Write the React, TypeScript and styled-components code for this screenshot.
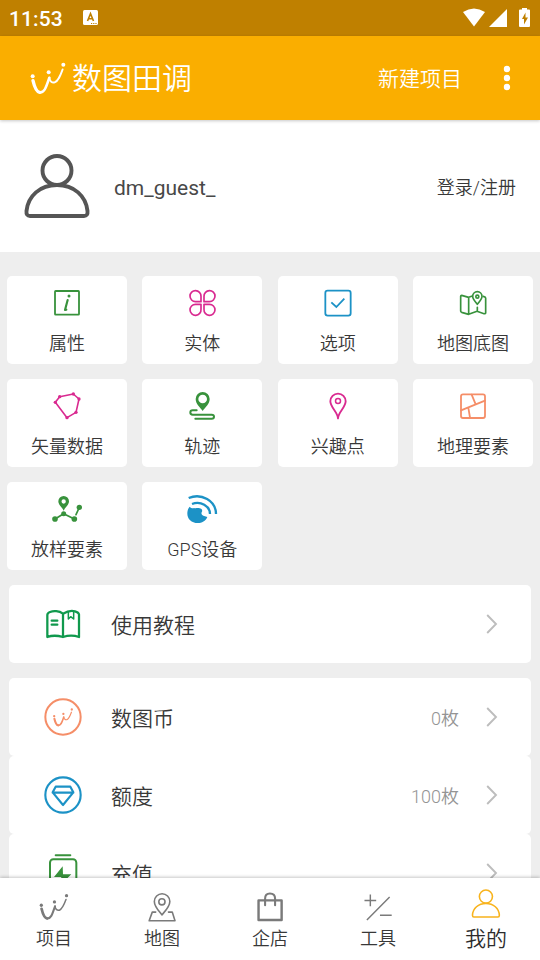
import React from 'react';
import styled, { createGlobalStyle } from 'styled-components';

const GREEN = '#38923c';
const PINK = '#d92a90';
const BLUE = '#1c92c6';
const CORAL = '#f58e68';
const GREY = '#7a7a7a';
const AMBER = '#f8b31c';

const GlobalStyle = createGlobalStyle`
  * { box-sizing: border-box; }
  body {
    margin: 0;
    background: #eee;
    font-family: Roboto, "Noto Sans CJK SC", sans-serif;
    color: #383838;
  }
  svg { display: block; flex: none; }
`;

const Screen = styled.div`
  width: 540px;
  height: 960px;
  display: flex;
  flex-direction: column;
  overflow: hidden;
  background: #eee;
  font-weight: 350;
`;

const StatusBar = styled.div`
  height: 36px;
  flex: none;
  display: flex;
  align-items: center;
  justify-content: space-between;
  padding: 0 9px;
  background: #bf8000;
  color: #fff;
`;

const StatusGroup = styled.div`
  display: flex;
  align-items: center;
`;

const Clock = styled.span`
  width: 74px;
  font-size: 21px;
  line-height: 36px;
  font-weight: 500;
  letter-spacing: 0.1px;
  padding-top: 2px;
`;

const AppBar = styled.header`
  height: 84px;
  flex: none;
  display: flex;
  align-items: center;
  padding: 0 22px 0 30px;
  background: #faae00;
  color: #fff;
  box-shadow: 0 1px 3px rgba(0, 0, 0, 0.22);
  z-index: 1;
`;

const AppTitle = styled.h1`
  margin: 2px auto 0 6px;
  font-size: 30px;
  line-height: 84px;
  font-weight: 350;
`;

const BarAction = styled.span`
  font-size: 21px;
  line-height: 84px;
  margin: 2px 34px 0 0;
`;

const Profile = styled.section`
  height: 132px;
  flex: none;
  display: flex;
  align-items: center;
  padding: 0 24px;
  background: #fff;
`;

const UserName = styled.span`
  margin: 3px auto 0 24px;
  font-size: 21px;
  font-weight: 400;
  color: #484848;
`;

const LoginLink = styled.span`
  margin-top: -1px;
  font-size: 18px;
`;

const Content = styled.main`
  flex: 1;
  min-height: 0;
  overflow: hidden;
  padding-top: 24px;
`;

const TileGrid = styled.div`
  display: grid;
  grid-template-columns: repeat(4, 120px);
  justify-content: space-between;
  row-gap: 15px;
  padding: 0 7px;
`;

const TileBox = styled.div`
  height: 88px;
  display: flex;
  flex-direction: column;
  align-items: center;
  padding-top: 9px;
  border-radius: 5px;
  background: #fff;
`;

const TileLabel = styled.span`
  margin-top: 9px;
  font-size: 18px;
  line-height: 28px;
  white-space: nowrap;
`;

const CardGroup = styled.div`
  margin: 15px 9px 0;
`;

const RowBox = styled.div`
  height: 78px;
  display: flex;
  align-items: center;
  padding: 0 33px;
  border-radius: 5px;
  background: #fff;
`;

const RowLabel = styled.span`
  margin: 4px auto 0 27px;
  font-size: 21px;
  line-height: 30px;
`;

const RowValue = styled.span`
  margin: 4px 27px 0 0;
  font-size: 18px;
  line-height: 28px;
  color: #949494;
`;

const TabBar = styled.nav`
  height: 82px;
  flex: none;
  display: grid;
  grid-template-columns: repeat(5, 1fr);
  background: #fff;
  box-shadow: 0 -1px 3px rgba(0, 0, 0, 0.22);
  z-index: 1;
`;

const Tab = styled.div<{ $active?: boolean }>`
  display: flex;
  flex-direction: column;
  align-items: center;
  padding-top: 10px;
  color: ${(p) => (p.$active ? '#2c2c2c' : '#383838')};
  font-size: ${(p) => (p.$active ? 21 : 18)}px;
  line-height: 30px;
`;

const LogoStrokes = ({ weight = 1 }: { weight?: number }) => (
  <g>
    <path d="M99 241C103 258 108 275 119 276" strokeWidth={10 * weight} />
    <path d="M119 276C134 278 139 258 148 232" strokeWidth={7.5 * weight} />
    <path d="M148 232C150 244 156 248 164 246C175 242 181 226 188 207" strokeWidth={5.5 * weight} />
    <g fill="currentColor" stroke="none">
      <circle cx="98" cy="228" r="6" />
      <circle cx="146" cy="216" r="6" />
      <circle cx="190" cy="193" r="6" />
    </g>
  </g>
);

const LogoMark = () => (
  <svg width="36" height="32" viewBox="90 185 108 96" fill="none" stroke="currentColor" strokeLinecap="round" strokeLinejoin="round">
    <LogoStrokes />
  </svg>
);

type DrawingProps = { color: string; size?: number; view?: number; weight?: number; children: React.ReactNode };

const Drawing = ({ color, size = 36, view = 108, weight = 5.4, children }: DrawingProps) => (
  <svg width={size} height={size} viewBox={`0 0 ${view} ${view}`} fill="none" color={color} stroke="currentColor" strokeWidth={weight} strokeLinecap="round" strokeLinejoin="round">
    {children}
  </svg>
);

const tiles = [
  {
    label: '属性',
    icon: (
      <Drawing color={GREEN}>
        <rect x="18" y="18" width="72" height="71" rx="2" />
        <path d="M56 45L48 75L52 74" strokeWidth="6.500" />
        <circle cx="60" cy="33" r="4.500" fill="currentColor" stroke="none" />
      </Drawing>
    ),
  },
  {
    label: '实体',
    icon: (
      <Drawing color={PINK} weight={5}>
        <path d="M51 50V34A16.500 16.500 0 1 0 34.500 50Z" />
        <path d="M60 50V34A16.500 16.500 0 1 1 76.500 50Z" />
        <path d="M51 58V73A16.500 16.500 0 1 1 34.500 58Z" />
        <path d="M60 58V73A16.500 16.500 0 1 0 76.500 58Z" />
      </Drawing>
    ),
  },
  {
    label: '选项',
    icon: (
      <Drawing color={BLUE}>
        <rect x="16" y="17" width="76" height="75" rx="7" />
        <path d="M34 52L49 66L73 41" strokeLinecap="butt" strokeLinejoin="miter" />
      </Drawing>
    ),
  },
  {
    label: '地图底图',
    icon: (
      <Drawing color={GREEN} weight={5}>
        <path d="M52 33L41 37L20 31Q17 31 17 34V78Q17 81 20 82L41 88L66 79L87 86Q92 87 92 83V39Q92 36 85 34M41 37V88M67 67V78" />
        <path d="M67 58C60 49 53 43 53 34A14 14 0 0 1 81 34C81 43 74 49 67 58Z" />
        <circle cx="67" cy="35" r="4.500" />
      </Drawing>
    ),
  },
  {
    label: '矢量数据',
    icon: (
      <Drawing color={PINK} weight={4.8}>
        <path d="M32 26L73 18L90 33L81 73L54 89L19 43Z" />
        <g fill="currentColor" stroke="none">
          <circle cx="32" cy="26" r="5" />
          <circle cx="73" cy="18" r="5" />
          <circle cx="90" cy="33" r="5" />
          <circle cx="81" cy="73" r="5" />
          <circle cx="54" cy="89" r="5" />
          <circle cx="19" cy="43" r="5" />
        </g>
      </Drawing>
    ),
  },
  {
    label: '轨迹',
    icon: (
      <Drawing color={GREEN} weight={6}>
        <path fill="currentColor" stroke="none" fillRule="evenodd" d="M56 69C48 57 35 48 35 33A21 21 0 0 1 77 33C77 48 64 57 56 69ZM56 20A13 13 0 1 0 56 46A13 13 0 1 0 56 20Z" />
        <path d="M38 67H26Q19 67 19 73.500Q19 80 26 80H83Q90 80 90 86Q90 92 83 92H34" />
      </Drawing>
    ),
  },
  {
    label: '兴趣点',
    icon: (
      <Drawing color={PINK} weight={5.6}>
        <path d="M54 91C53 72 31 58 31 40A23 23 0 0 1 77 40C77 58 55 72 54 91Z" />
        <circle cx="54" cy="39" r="7.500" strokeWidth="4.500" />
      </Drawing>
    ),
  },
  {
    label: '地理要素',
    icon: (
      <Drawing color={CORAL}>
        <rect x="18" y="19" width="72" height="71" rx="6" />
        <path d="M18 67L90 38M50 20L62 49M40 59L45 89" />
      </Drawing>
    ),
  },
  {
    label: '放样要素',
    icon: (
      <Drawing color={GREEN} weight={5}>
        <path d="M18 84L44 68L76 84M81 71L91 49" />
        <path fill="currentColor" stroke="none" fillRule="evenodd" d="M44 59C39 48 28 42 28 31A16 16 0 0 1 60 31C60 42 49 48 44 59ZM44 25A6.500 6.500 0 1 0 44 38A6.500 6.500 0 1 0 44 25Z" />
        <g fill="currentColor" stroke="none">
          <circle cx="44" cy="68" r="7.500" />
          <circle cx="18" cy="84" r="8.500" />
          <circle cx="76" cy="84" r="8.500" />
          <circle cx="91" cy="49" r="8" />
        </g>
      </Drawing>
    ),
  },
  {
    label: 'GPS设备',
    icon: (
      <Drawing color={BLUE} weight={7}>
        <path fill="currentColor" stroke="none" d="M17 47C21 51 26 53 30 51C35 53 41 50 47 52C53 52 57 59 53 64C51 68 54 73 58 74L70 78C65 90 53 96 42 96C22 96 10 83 10 68C10 60 12 52 17 47Z" />
        <path d="M14 21C52 5 96 29 96 69M24 39C50 29 78 45 78 69" strokeLinecap="butt" />
      </Drawing>
    ),
  },
];

const RowDrawing = ({ color, weight = 6, children }: { color: string; weight?: number; children: React.ReactNode }) => (
  <Drawing color={color} size={42} view={126} weight={weight}>{children}</Drawing>
);

const BookIcon = () => (
  <RowDrawing color="#10994d" weight={6.8}>
    <path d="M63 32C51 23 34 23 24 27Q16 30 16 36V102C30 97 49 98 63 102C78 97 97 97 111 102V34Q110 28 99 25C87 22 75 25 63 32ZM63 32V102" />
    <path d="M29 53H46M29 65H46" />
    <path d="M79 27V48L86 41L95 48V27" strokeWidth="4.500" />
  </RowDrawing>
);

const CoinIcon = () => (
  <RowDrawing color={CORAL}>
    <circle cx="63" cy="63" r="53" />
    <svg x="32" y="35" width="62" height="57" viewBox="90 185 108 96">
      <LogoStrokes weight={1.1} />
    </svg>
  </RowDrawing>
);

const DiamondIcon = () => (
  <RowDrawing color={BLUE} weight={6.4}>
    <circle cx="63" cy="63" r="53" />
    <path d="M41 38H85L94 55L63 93L32 55ZM32 56H94" />
  </RowDrawing>
);

const ChargeIcon = () => (
  <RowDrawing color={GREEN}>
    <path d="M41 10H85" />
    <rect x="24" y="22" width="79" height="98" rx="10" />
    <path fill="currentColor" stroke="none" d="M62 43L36 75H58L53 101L88 67H63Z" />
  </RowDrawing>
);

const Chevron = () => (
  <svg width="12" height="20" viewBox="0 0 12 20" fill="none" stroke="#bdbdbd" strokeWidth="1.900">
    <path d="M1.200 1L10 10L1.200 19" />
  </svg>
);

const Row = ({ icon, label, value }: { icon: React.ReactNode; label: string; value?: string }) => (
  <RowBox>
    {icon}
    <RowLabel>{label}</RowLabel>
    {value && <RowValue>{value}</RowValue>}
    <Chevron />
  </RowBox>
);

const TabDrawing = ({ color = GREY, weight = 4.6, children }: { color?: string; weight?: number; children: React.ReactNode }) => (
  <Drawing color={color} view={104.5} weight={weight}>{children}</Drawing>
);

const tabs = [
  {
    label: '项目',
    icon: (
      <TabDrawing>
        <svg x="9" y="13" width="86" height="82" viewBox="90 185 108 96">
          <LogoStrokes />
        </svg>
      </TabDrawing>
    ),
  },
  {
    label: '地图',
    icon: (
      <TabDrawing>
        <path d="M52 78C43 66 30 54 30 39A22.500 22.500 0 0 1 75 39C75 54 62 66 52 78Z" />
        <circle cx="52" cy="40" r="9" />
        <path d="M34 70H24L15 95H90L82 70H71" />
      </TabDrawing>
    ),
  },
  {
    label: '企店',
    icon: (
      <TabDrawing weight={7}>
        <rect x="19" y="36" width="67" height="57" />
        <path d="M38 50V31Q38 16 52 16Q67 16 67 31V50" strokeWidth="6" />
      </TabDrawing>
    ),
  },
  {
    label: '工具',
    icon: (
      <TabDrawing weight={4.2}>
        <path d="M13 36H47M30 19V53M20 93L86 26M58 79H92" strokeLinecap="butt" />
      </TabDrawing>
    ),
  },
  {
    label: '我的',
    active: true,
    icon: (
      <TabDrawing color={AMBER}>
        <circle cx="52" cy="25" r="19" />
        <path d="M13 79C14 59 30 45 52 45C74 45 90 59 91 79Q91 84 87 84H17Q13 84 13 79Z" />
      </TabDrawing>
    ),
  },
];

const KeyboardBadge = () => (
  <svg width="16" height="16" viewBox="0 0 16 16">
    <rect width="15" height="15" rx="1.500" fill="#fff" />
    <path d="M4.500 11L7.500 3.700L10.500 11M5.500 8.700H9.500" fill="none" stroke="#bf8000" strokeWidth="1.600" />
    <path d="M8 13.500H14" stroke="#bf8000" strokeDasharray="1.200 1" />
  </svg>
);

const SystemIcons = () => (
  <svg width="68" height="20" viewBox="0 0 68 20" fill="#fff">
    <path d="M0 4Q11 -3 22 4L11 18.500Z" />
    <path d="M44 1V19H26Z" />
    <path fillRule="evenodd" d="M59 0H64V1.500H66Q67 1.500 67 2.500V18Q67 19 66 19H57Q56 19 56 18V2.500Q56 1.500 57 1.500H59ZM62.500 4.500L59 11H61V16.500L65 9.500H62.500Z" />
  </svg>
);

const Avatar = () => (
  <svg width="66" height="66" viewBox="0 0 66 66" fill="none" stroke="#555" strokeWidth="3.900" strokeLinejoin="round">
    <circle cx="33" cy="17.500" r="14.500" />
    <path d="M2.500 58C4 43 16 32 33 32C50 32 62 43 63.500 58Q64 63 60 63H6Q2 63 2.500 58Z" />
  </svg>
);

const MoreIcon = () => (
  <svg width="22" height="26" viewBox="0 0 22 26" fill="#fff">
    <circle cx="11" cy="4" r="3.200" />
    <circle cx="11" cy="13" r="3.200" />
    <circle cx="11" cy="22" r="3.200" />
  </svg>
);

export default function App() {
  return (
    <Screen>
      <GlobalStyle />
      <StatusBar>
        <StatusGroup>
          <Clock>11:53</Clock>
          <KeyboardBadge />
        </StatusGroup>
        <SystemIcons />
      </StatusBar>
      <AppBar>
        <LogoMark />
        <AppTitle>数图田调</AppTitle>
        <BarAction>新建项目</BarAction>
        <MoreIcon />
      </AppBar>
      <Profile>
        <Avatar />
        <UserName>dm_guest_</UserName>
        <LoginLink>登录/注册</LoginLink>
      </Profile>
      <Content>
        <TileGrid>
          {tiles.map((tile) => (
            <TileBox key={tile.label}>
              {tile.icon}
              <TileLabel>{tile.label}</TileLabel>
            </TileBox>
          ))}
        </TileGrid>
        <CardGroup>
          <Row icon={<BookIcon />} label="使用教程" />
        </CardGroup>
        <CardGroup>
          <Row icon={<CoinIcon />} label="数图币" value="0枚" />
          <Row icon={<DiamondIcon />} label="额度" value="100枚" />
          <Row icon={<ChargeIcon />} label="充值" />
        </CardGroup>
      </Content>
      <TabBar>
        {tabs.map((tab) => (
          <Tab key={tab.label} $active={tab.active}>
            {tab.icon}
            {tab.label}
          </Tab>
        ))}
      </TabBar>
    </Screen>
  );
}
